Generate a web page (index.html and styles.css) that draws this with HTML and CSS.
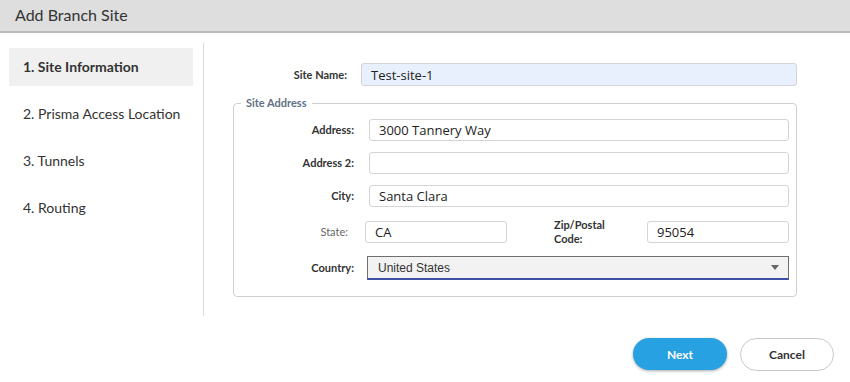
FILE: index.html
```html
<!DOCTYPE html>
<html>
<head>
<meta charset="utf-8">
<link rel="stylesheet" href="styles.css">
</head>
<body>
<div class="header"><span class="title">Add Branch Site</span></div>
<div class="main">
  <nav class="steps">
    <div class="step active">1. Site Information</div>
    <div class="step">2. Prisma Access Location</div>
    <div class="step">3. Tunnels</div>
    <div class="step">4. Routing</div>
  </nav>
  <div class="content">
    <div class="form">
      <div class="row-top">
        <label class="lbl">Site Name:</label>
        <div class="inp inp-blue">Test-site-1</div>
      </div>
      <fieldset class="addr">
        <legend class="legend">Site Address</legend>
        <div class="row">
          <label class="lbl">Address:</label>
          <div class="inp">3000 Tannery Way</div>
        </div>
        <div class="row">
          <label class="lbl">Address 2:</label>
          <div class="inp"></div>
        </div>
        <div class="row">
          <label class="lbl">City:</label>
          <div class="inp">Santa Clara</div>
        </div>
        <div class="row row-split">
          <label class="lbl lbl-light">State:</label>
          <div class="inp">CA</div>
          <label class="lbl lbl-zip">Zip/Postal<br>Code:</label>
          <div class="inp">95054</div>
        </div>
        <div class="row row-country">
          <label class="lbl">Country:</label>
          <div class="select"><span>United States</span><span class="arrow"></span></div>
        </div>
      </fieldset>
    </div>
  </div>
</div>
<div class="footer">
  <button class="btn btn-next">Next</button>
  <button class="btn btn-cancel">Cancel</button>
</div>
</body>
</html>
```
FILE: styles.css
```css
* { box-sizing: border-box; }
html, body { margin: 0; padding: 0; background: #fff; }
body { font-family: Lato, "Open Sans", sans-serif; color: #333; width: 850px; height: 382px; overflow: hidden; }

.header {
  height: 33px;
  background: #dedede;
  border-bottom: 2px solid #b9bcbf;
  padding: 0 0 3px 15px;
  display: flex;
  align-items: center;
}
.title { font-size: 16px; color: #333; }

.main { display: flex; margin-top: 10px; height: 273px; }
.steps {
  width: 204px;
  border-right: 1px solid #dcdcdc;
  padding: 5px 10px 0 9px;
}
.step {
  height: 38px;
  margin-bottom: 9px;
  padding-left: 14px;
  padding-bottom: 2px;
  display: flex;
  align-items: center;
  font-size: 14px;
  color: #333;
}
.step.active { background: #f0f0f0; font-weight: bold; }

.content { flex: 1; padding: 20px 0 0 29px; }
.form { width: 564px; }

.lbl { font-size: 11px; font-weight: bold; color: #333; text-align: right; line-height: 14px; }
.row-top { display: grid; grid-template-columns: 114px 436px; column-gap: 14px; align-items: center; }
.inp {
  height: 23px;
  border: 1px solid #d4d4d4;
  border-radius: 3px;
  background: #fff;
  padding-left: 9px;
  font-family: "Open Sans", sans-serif;
  font-size: 13px;
  color: #222;
  display: flex;
  align-items: center;
}
.inp-blue { background: #e8f0fe; }

.addr {
  margin: 10px 0 0 0;
  border: 1px solid #d0d0d0;
  border-radius: 4px;
  padding: 9px 7px 16px 0;
}
.legend {
  margin-left: 7px;
  padding: 0 5px;
  font-size: 11px;
  font-weight: bold;
  color: #5f7183;
  line-height: 14px;
}
.row { display: grid; grid-template-columns: 120px 420px; column-gap: 15px; align-items: center; margin-bottom: 11px; }
.row .inp { height: 22px; }
.row-split { grid-template-columns: 131px 142px 140px 142px; column-gap: 0; height: 27px; }
.row-split .lbl-light { padding-right: 17px; font-weight: normal; color: #666; }
.row-split .lbl-zip { text-align: left; padding-left: 47px; }
.row-country { grid-template-columns: 120px 422px; column-gap: 13px; margin-bottom: 0; }

.select {
  height: 24px;
  background: #f2f2f2;
  border: 1px solid #6f6f6f;
  border-bottom: 2px solid #3d4fa6;
  display: flex;
  align-items: center;
  justify-content: space-between;
  padding: 0 9px 0 10px;
  font-family: "Liberation Sans", Arial, sans-serif;
  font-size: 12px;
  color: #333;
}
.arrow {
  width: 0; height: 0;
  border-left: 4px solid transparent;
  border-right: 4px solid transparent;
  border-top: 5px solid #666;
}

.footer { display: flex; justify-content: flex-end; gap: 13px; padding: 22px 16px 0 0; }
.btn {
  width: 94px;
  height: 32px;
  border-radius: 17px;
  font-family: Lato, sans-serif;
  font-size: 12px;
  font-weight: bold;
  cursor: pointer;
}
.btn-next { background: #27a1e2; color: #fff; border: none; box-shadow: 0 1px 3px rgba(0,0,0,0.35); }
.btn-cancel { background: #fff; color: #333; border: 1px solid #c8c8c8; height: 33px; }
```
